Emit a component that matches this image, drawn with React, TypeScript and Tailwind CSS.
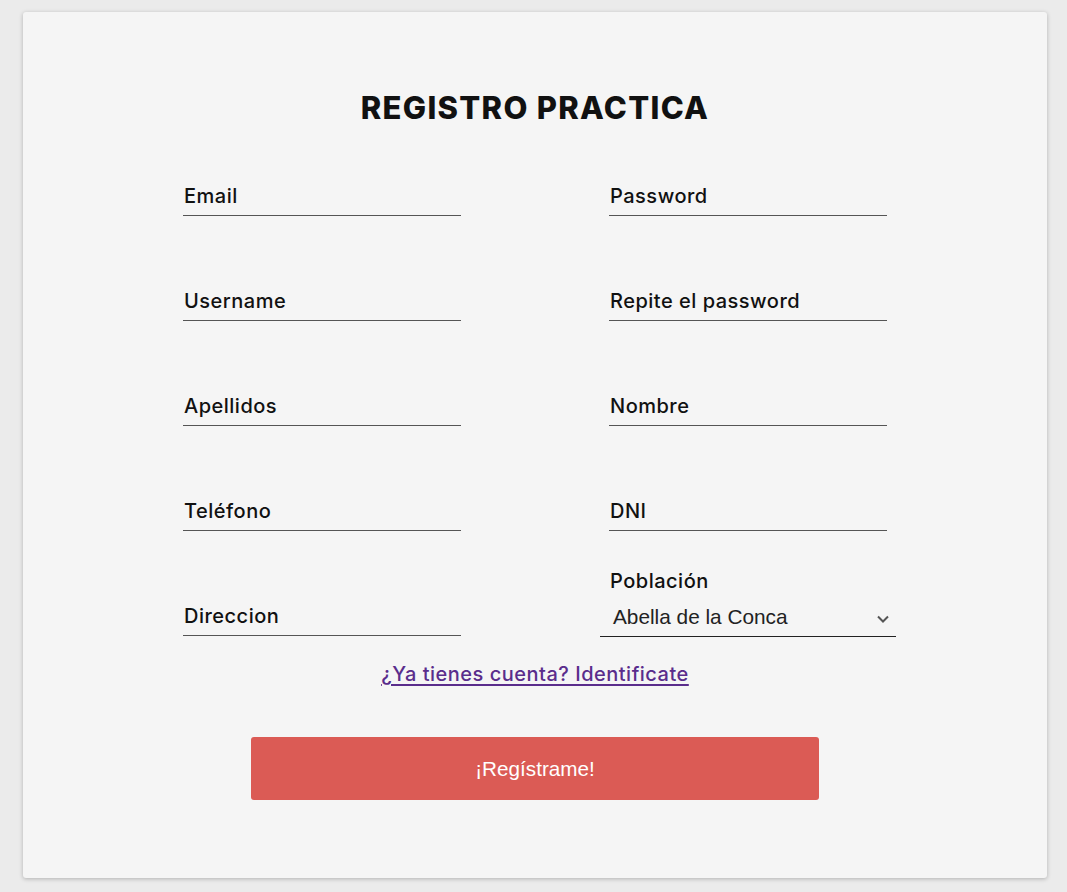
import React from "react";

const F = { fontFamily: "Inter, 'Noto Sans', sans-serif" };

function Field({ label }: { label: string }) {
  return (
    <div className="flex flex-col justify-end h-full">
      <div className="border-b border-[#555] pb-[7px]">
        <span className="block text-[20px] leading-[24px] font-medium tracking-[0.5px] text-[#111] pl-[1px]">{label}</span>
      </div>
    </div>
  );
}

function SelectField() {
  return (
    <div className="flex flex-col justify-end h-full">
      <span className="block text-[20px] leading-[24px] font-medium tracking-[0.5px] text-[#111] pl-[1px]">Población</span>
      <div className="-mx-[9px] -mb-[1px] mt-[1px] h-[43px] border-b border-[#222] flex items-center justify-between pl-[13px] pr-[6px] pt-[4px]">
        <span className="text-[20.8px] text-[#222]" style={{ fontFamily: "'Liberation Sans', Arial, sans-serif" }}>
          Abella de la Conca
        </span>
        <svg width="14" height="10" viewBox="0 0 14 10" className="mt-[4px]">
          <path d="M2 2.5 L7 7.5 L12 2.5" fill="none" stroke="#555" strokeWidth="2" />
        </svg>
      </div>
    </div>
  );
}

export default function App() {
  return (
    <div className="w-[1067px] h-[892px] bg-[#ebebeb] pt-[12px] pl-[23px]" style={F}>
      <div className="w-[1024px] h-[866px] bg-[#f5f5f5] rounded-[3px] shadow-[0_1px_4px_rgba(0,0,0,0.25)] flex flex-col items-center pt-[78px]">
        <h1 className="text-[31px] leading-[36px] font-extrabold text-[#111] tracking-[1.3px]">REGISTRO PRACTICA</h1>
        <div className="mt-[58px] w-[704px] grid grid-cols-[278px_278px] justify-between grid-rows-[32px_105px_105px_105px_105px]">
          <Field label="Email" />
          <Field label="Password" />
          <Field label="Username" />
          <Field label="Repite el password" />
          <Field label="Apellidos" />
          <Field label="Nombre" />
          <Field label="Teléfono" />
          <Field label="DNI" />
          <Field label="Direccion" />
          <SelectField />
        </div>
        <a href="#" className="mt-[26px] text-[20px] leading-[24px] font-medium tracking-[0.5px] text-[#5a2d8c] underline underline-offset-[3px]">
          ¿Ya tienes cuenta? Identificate
        </a>
        <button
          className="mt-[51px] w-[568px] h-[63px] bg-[#db5b55] rounded-[3px] text-white text-[20.7px]"
          style={{ fontFamily: "'Liberation Sans', Arial, sans-serif" }}
        >
          ¡Regístrame!
        </button>
      </div>
    </div>
  );
}
